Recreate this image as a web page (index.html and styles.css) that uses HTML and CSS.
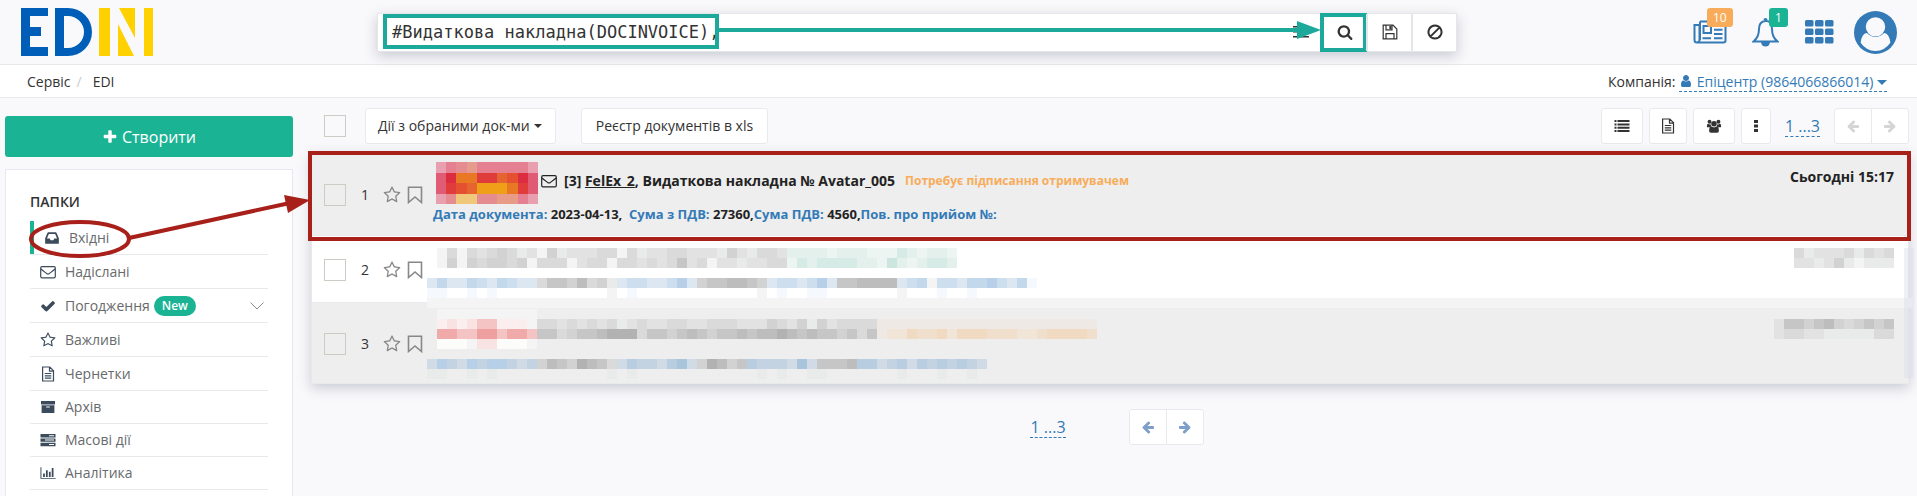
FILE: index.html
```html
<!DOCTYPE html>
<html lang="uk">
<head>
<meta charset="utf-8">
<title>EDIN</title>
<link rel="stylesheet" href="styles.css">
</head>
<body>
<svg class="defs" aria-hidden="true">
  <symbol id="i-search" viewBox="0 0 1792 1792"><path d="M1216 832q0-185-131.500-316.500t-316.500-131.500-316.500 131.500-131.500 316.500 131.500 316.500 316.500 131.500 316.500-131.500 131.500-316.500zm512 832q0 52-38 90t-90 38q-54 0-90-38l-343-342q-179 124-399 124-143 0-273.500-55.500t-225-150-150-225-55.500-273.500 55.500-273.500 150-225 225-150 273.500-55.500 273.500 55.500 225 150 150 225 55.500 273.500q0 220-124 399l343 343q37 37 37 90z"/></symbol>
  <symbol id="i-plus" viewBox="0 0 1792 1792"><path d="M1600 736v192q0 40-28 68t-68 28h-416v416q0 40-28 68t-68 28h-192q-40 0-68-28t-28-68v-416h-416q-40 0-68-28t-28-68v-192q0-40 28-68t68-28h416v-416q0-40 28-68t68-28h192q40 0 68 28t28 68v416h416q40 0 68 28t28 68z"/></symbol>
  <symbol id="i-check" viewBox="0 0 1792 1792"><path d="M1671 566q0 40-28 68l-724 724-136 136q-28 28-68 28t-68-28l-136-136-362-362q-28-28-28-68t28-68l136-136q28-28 68-28t68 28l294 295 656-657q28-28 68-28t68 28l136 136q28 28 28 68z"/></symbol>
  <symbol id="i-star" viewBox="0 0 1792 1792"><path d="M1201 1004l306-297-422-62-189-382-189 382-422 62 306 297-73 421 378-199 377 199zm527-357q0 22-26 48l-363 354 86 500q1 7 1 20 0 50-41 50-19 0-40-12l-449-236-449 236q-22 12-40 12-21 0-31.500-14.500t-10.500-35.500q0-6 2-20l86-500-364-354q-25-27-25-48 0-37 56-46l502-73 225-455q19-41 49-41t49 41l225 455 502 73q56 9 56 46z"/></symbol>
  <symbol id="i-user" viewBox="0 0 1792 1792"><path d="M1536 1399q0 109-62.500 187t-150.500 78h-854q-88 0-150.500-78t-62.500-187q0-85 8.500-160.500t31.500-152 58.500-131 94-89 134.500-34.500q131 128 313 128t313-128q76 0 134.500 34.500t94 89 58.500 131 31.500 152 8.500 160.500zm-256-887q0 159-112.500 271.500t-271.500 112.500-271.500-112.500-112.500-271.500 112.500-271.500 271.500-112.500 271.500 112.500 112.500 271.500z"/></symbol>
  <symbol id="i-inbox" viewBox="0 0 1792 1792"><path d="M1151 960h316q-1-3-2.500-8t-2.500-8l-212-496h-708l-212 496q-1 2-2.500 8t-2.500 8h316l95 192h320zm513 30v482q0 26-19 45t-45 19h-1408q-26 0-45-19t-19-45v-482q0-62 25-123l238-552q10-25 36.500-42t52.500-17h832q26 0 52.500 17t36.500 42l238 552q25 61 25 123z"/></symbol>
  <symbol id="i-left" viewBox="0 0 1792 1792"><path d="M1664 896v128q0 53-32.500 90.500t-84.500 37.500h-704l293 294q38 36 38 90t-38 90l-75 76q-37 37-90 37-52 0-91-37l-651-652q-37-37-37-90 0-52 37-91l651-650q38-38 91-38 52 0 90 38l75 74q38 38 38 91t-38 91l-293 293h704q52 0 84.500 37.500t32.500 90.500z"/></symbol>
  <symbol id="i-mail" viewBox="0 0 16 16"><path class="line" d="M2 2.700h12q1.300 0 1.300 1.300v8.500q0 1.300-1.300 1.300H2q-1.300 0-1.300-1.300V4q0-1.300 1.300-1.300zM1 5c3 2.500 4 3.200 5.500 4.400q1.500 1 3 0C11 8.200 12 7.500 15 5"/></symbol>
  <symbol id="i-file" viewBox="0 0 16 16"><path class="line" d="M2.600 1h7.200l3.700 3.700V15H2.600zM9.500 1.200v3.900h3.800M4.800 7.500h6.500M4.800 9.800h6.500M4.800 12.100h6.500"/></symbol>
  <symbol id="i-archive" viewBox="0 0 16 16"><path fill-rule="evenodd" d="M1 2h14v3.500H1zM1.600 6.200h12.800V14H1.600zM6.200 7.400v1.200h3.600V7.400z"/></symbol>
  <symbol id="i-server" viewBox="0 0 16 16"><path fill-rule="evenodd" d="M.5 2h15v3.400H.5zM9 3.200v1h5v-1zM.5 6.400h15v3.400H.5zM5 7.600v1h9v-1zM.5 10.800h15v3.400H.5zM9 12v1h5v-1z"/></symbol>
  <symbol id="i-chart" viewBox="0 0 18 16"><path d="M.5 1.500h1.100v12h16v1.100H.5zM3.500 8.500h2v4h-2zM6.700 5h2v7.500h-2zM10 6.500h2v6h-2zM13.200 2.500h2v10h-2z"/></symbol>
  <symbol id="i-list" viewBox="0 0 16 14"><path d="M.5 1h2v2h-2zM3.500 1h12v2h-12zM.5 4.400h2v2h-2zM3.500 4.400h12v2h-12zM.5 7.800h2v2h-2zM3.500 7.800h12v2h-12zM.5 11h2v2h-2zM3.500 11h12v2h-12z"/></symbol>
  <symbol id="i-users" viewBox="0 0 18 16"><circle cx="4" cy="3.200" r="2.200"/><circle cx="14" cy="3.200" r="2.200"/><circle cx="9" cy="5.400" r="3.100"/><path d="M1 8.800Q.8 5.400 2.500 5.600 4 6.600 5.400 6q0 1.800 1 2.600-1.500 0-2 .8H2Q1 9.400 1 8.800zM17 8.800q.2-3.400-1.500-3.200-1.500 1-2.900.4 0 1.800-1 2.600 1.500 0 2 .8H16q1 0 1-.6zM3.500 13.500q0-4.700 2.700-4.800Q9 10.500 11.800 8.700q2.700.1 2.700 4.800 0 2-2 2h-7q-2 0-2-2z"/></symbol>
  <symbol id="i-bookmark" viewBox="0 0 16 18"><path class="mid" d="M1.500 1.200h13v15.300L8 11l-6.500 5.500z"/></symbol>
  <symbol id="i-save" viewBox="0 0 16 16"><path class="line" d="M1.200 1.200h9.800l3.800 3.800v9.800H1.200zM4 14.500V9.600h8v4.900M4 1.500v4.300h6V1.500"/><path d="M7.400 2h2v3h-2z"/></symbol>
  <symbol id="i-ban" viewBox="0 0 16 16"><path class="bold" d="M8 1.500a6.500 6.500 0 1 0 .01 0zM3.600 12.400l8.800-8.800"/></symbol>
</svg>

<header class="top">
  <a class="logo" href="#" aria-label="EDIN">
    <svg class="logo-e" viewBox="0 0 27 48"><rect width="9" height="48"/><rect width="27" height="8"/><rect y="19" width="20" height="9"/><rect y="39" width="27" height="9"/></svg>
    <span class="logo-d"></span>
    <svg class="logo-n" viewBox="0 0 54 48"><rect width="11" height="48"/><path d="M20 0h16v30zM19 16v32h16z"/><rect x="45" width="9" height="48"/></svg>
  </a>
  <form class="search">
    <input class="query" type="text" aria-label="Пошук" value="#Видаткова накладна(DOCINVOICE),">
    <svg class="filters" viewBox="0 0 16 14"><path d="M0 1h16v1.500H0zM0 6h16v1.500H0zM0 11h16v1.500H0z"/></svg>
    <button type="button" class="tool target" aria-label="Знайти"><svg class="ic"><use href="#i-search"/></svg></button>
    <button type="button" class="tool" aria-label="Зберегти"><svg class="ic"><use href="#i-save"/></svg></button>
    <button type="button" class="tool" aria-label="Очистити"><svg class="ic"><use href="#i-ban"/></svg></button>
    <span class="query-frame"></span>
    <span class="query-arrow"></span>
  </form>
  <nav class="quick">
    <a href="#" class="news" aria-label="Новини"><svg viewBox="0 0 34 24"><path class="bold" d="M7 1.500h25.500v19q0 2-2 2H4q-2.500 0-2.500-2.500V5H6.500v15q0 2-2 2.300M7 1.500V20"/><path class="bold" d="M10.500 6h7.500v7h-7.500zM21 5.500h8.500M21 9.800h8.500M21 14.100h8.500M9.500 18.300H18M21 18.300h8.500"/></svg><span class="badge orange">10</span></a>
    <a href="#" class="bell" aria-label="Сповіщення"><svg viewBox="0 0 27 30"><path class="bold" d="M1.500 24.500Q7 20 7 12q0-7.500 6.500-8T20 12q0 8 5.500 12.500z"/><path d="M11.500 3a2 2 0 1 1 4 0zM9 25h9q-.5 4.500-4.500 4.500T9 25z"/></svg><span class="badge green">1</span></a>
    <a href="#" class="grid" aria-label="Сервіси"><svg viewBox="0 0 29 24"><rect width="8.500" height="6.500" rx="1.500"/><rect x="10" width="8.500" height="6.500" rx="1.500"/><rect x="20" width="8.500" height="6.500" rx="1.500"/><rect y="8.500" width="8.500" height="6.500" rx="1.500"/><rect x="10" y="8.500" width="8.500" height="6.500" rx="1.500"/><rect x="20" y="8.500" width="8.500" height="6.500" rx="1.500"/><rect y="17" width="8.500" height="6.500" rx="1.500"/><rect x="10" y="17" width="8.500" height="6.500" rx="1.500"/><rect x="20" y="17" width="8.500" height="6.500" rx="1.500"/></svg></a>
    <a href="#" class="avatar" aria-label="Профіль"><svg viewBox="0 0 42 42"><circle cx="21" cy="21" r="21"/><circle cx="21" cy="15.500" r="9.500" fill="#f9f9fb"/><path fill="#f9f9fb" d="M6.500 31Q7.500 22 12.500 21.500 21 29.500 29.500 21.500 34.500 22 35.500 31 30 39 21 39T6.500 31z"/></svg></a>
  </nav>
</header>

<div class="crumbs">
  <nav><a href="#">Сервіс</a><span class="slash">/</span><a href="#">EDI</a></nav>
  <div>Компанія: <a href="#" class="company"><svg class="ic"><use href="#i-user"/></svg> Епіцентр (9864066866014) <i class="caret"></i></a></div>
</div>

<div class="page">
  <aside class="side">
    <button type="button" class="create"><svg class="ic"><use href="#i-plus"/></svg> Створити</button>
    <div class="panel">
      <h2>ПАПКИ</h2>
      <ul class="folders">
        <li class="active"><a href="#"><svg class="ic"><use href="#i-inbox"/></svg>Вхідні</a></li>
        <li><a href="#"><svg class="ic"><use href="#i-mail"/></svg>Надіслані</a></li>
        <li><a href="#"><svg class="ic"><use href="#i-check"/></svg>Погодження<span class="new">New</span><svg class="chev" viewBox="0 0 14 8"><path d="M.5.500l6.500 6.500 6.500-6.500"/></svg></a></li>
        <li><a href="#"><svg class="ic"><use href="#i-star"/></svg>Важливі</a></li>
        <li><a href="#"><svg class="ic"><use href="#i-file"/></svg>Чернетки</a></li>
        <li><a href="#"><svg class="ic"><use href="#i-archive"/></svg>Архів</a></li>
        <li><a href="#"><svg class="ic"><use href="#i-server"/></svg>Масові дії</a></li>
        <li><a href="#"><svg class="ic"><use href="#i-chart"/></svg>Аналітика</a></li>
      </ul>
    </div>
  </aside>

  <main class="main">
    <div class="toolbar">
      <input type="checkbox" class="box" aria-label="Обрати все">
      <button type="button" class="btn actions">Дії з обраними док-ми <i class="caret"></i></button>
      <button type="button" class="btn xls">Реєстр документів в xls</button>
      <div class="right">
        <button type="button" class="btn" aria-label="Список"><svg class="ic"><use href="#i-list"/></svg></button>
        <button type="button" class="btn narrow" aria-label="Документ"><svg class="ic"><use href="#i-file"/></svg></button>
        <button type="button" class="btn" aria-label="Користувачі"><svg class="ic"><use href="#i-users"/></svg></button>
        <button type="button" class="btn" aria-label="Ще"><svg class="dots" viewBox="0 0 4 12"><path d="M0 0h4v3H0zM0 4.500h4v3H0zM0 9h4v3H0z"/></svg></button>
        <a href="#" class="range">1 ...3</a>
        <div class="pager off">
          <button type="button" disabled aria-label="Назад"><svg class="ic"><use href="#i-left"/></svg></button>
          <button type="button" disabled aria-label="Далі"><svg class="ic flip"><use href="#i-left"/></svg></button>
        </div>
      </div>
    </div>

    <div class="list">
      <article class="row first">
        <input type="checkbox" class="box" aria-label="Обрати документ 1"><span class="num">1</span>
        <svg class="mark"><use href="#i-star"/></svg><svg class="mark book"><use href="#i-bookmark"/></svg>
        <div class="doc">
          <div class="title"><svg class="mosaic avatar-px" data-rows="EFGHFFFFFE IJKKLLMQJI ILQMNNNKLI EGOOGGPPFE"></svg><svg class="ic"><use href="#i-mail"/></svg><b>[3] <a href="#">FelEx_2</a>, Видаткова накладна № Avatar_005</b><b class="need">Потребує підписання отримувачем</b></div>
          <p class="meta"><span>Дата документа:</span> 2023-04-13,&nbsp; <span>Сума з ПДВ:</span> 27360,<span>Сума ПДВ:</span> 4560,<span>Пов. про прийом №:</span></p>
        </div>
        <time>Сьогодні 15:17</time>
        <span class="row-frame"></span>
      </article>
      <article class="row second">
        <input type="checkbox" class="box" aria-label="Обрати документ 2"><span class="num">2</span>
        <svg class="mark"><use href="#i-star"/></svg><svg class="mark book"><use href="#i-bookmark"/></svg>
        <svg class="mosaic body-px" data-rows=".adadcdedbcaebcccddadbccddcccbecbddcssssrsssrrrtsrssr .aeaedeedeadddacddaddcdcdfcdaccbccddrtsttttssrusrstts . jljjlkjlkjjdffegdebjkkjjkmjeffggfejkkjkmjffggggjklakkjllmkjli ii..i.i...........a.i............a.i..ii.......a...i..i"></svg>
        <svg class="mosaic date-px" data-rows="dbcccdbdcd ccbcebabbb"></svg>
      </article>
      <article class="row third">
        <input type="checkbox" class="box" aria-label="Обрати документ 3"><span class="num">3</span>
        <svg class="mark"><use href="#i-star"/></svg><svg class="mark book"><use href="#i-bookmark"/></svg>
        <svg class="mosaic body-px" data-rows=".aaaaaaaaaa .vwvwxxvvvaddcdcdcdbcdccddccdddcccedcebecddddAAAAAAAAAAAAAAAAAAAAAA .yyxxzzxyyxffdeffghhhdffefgfeffgfgghgfgffefdfABBDCCDBDDDCCCBBCDDDDC .WWWawwWWWa . nmonmommonoegfehgfdnpoonpqnehgefpooonqnfffgppnopnpopopon bb..b.b...........b.b............b.b..bb.......b...b..b"></svg>
        <svg class="mosaic date-px" data-rows="cffefgedefef cddccbbbbbdd"></svg>
        <span class="band"></span>
      </article>
      <span class="edge"></span>
    </div>

    <div class="foot">
      <a href="#" class="range">1 ...3</a>
      <div class="pager">
        <button type="button" aria-label="Попередня сторінка"><svg class="ic"><use href="#i-left"/></svg></button>
        <button type="button" aria-label="Наступна сторінка"><svg class="ic flip"><use href="#i-left"/></svg></button>
      </div>
    </div>
  </main>
  <svg class="pointer" width="312" height="80" viewBox="0 0 312 80" aria-hidden="true"><ellipse cx="80" cy="50" rx="49" ry="17"/><path d="M129 49L290 14"/><path class="head" d="M284 6l26 5-22 13z"/></svg>
</div>
<script src="script.js"></script>
</body>
</html>
```

FILE: styles.css
```css
* { box-sizing: border-box; }
body { margin: 0; min-height: 100vh; display: flex; flex-direction: column; background: #f9f9fb; color: #333; font: 14px/20px "Open Sans", sans-serif; }
a { color: inherit; text-decoration: none; }
button { font: inherit; color: inherit; cursor: pointer; padding: 0; }
svg { fill: currentColor; flex: none; }
.defs { position: absolute; width: 0; height: 0; }
.ic { width: 16px; height: 16px; }
.line { fill: none; stroke: currentColor; stroke-width: 1.2; }
.mid { fill: none; stroke: currentColor; stroke-width: 1.6; }
.bold { fill: none; stroke: currentColor; stroke-width: 2; }
.flip { transform: scaleX(-1); }
.caret { display: inline-block; border: 4px solid transparent; border-top-color: currentColor; border-bottom: 0; vertical-align: middle; }

.top { height: 65px; display: grid; grid-template-columns: 377fr 1080fr 460fr; align-items: center; border-bottom: 1px solid #e7eaec; }
.logo { display: flex; gap: 7px; padding-left: 21px; color: #005eb8; }
.logo-e { width: 27px; height: 48px; }
.logo-d { width: 37px; height: 48px; border: 8px solid #005eb8; border-left-width: 9px; border-radius: 0 24px 24px 0; }
.logo-n { width: 54px; height: 48px; color: #ffd100; }
.search { position: relative; display: flex; height: 39px; background: #fff; border: 1px solid #e5e6e7; box-shadow: 0 4px 12px rgba(60, 60, 100, .25); }
.query { flex: 1; min-width: 0; border: 0; padding: 0 14px; background: none; color: #333; font: 17px "DejaVu Sans Mono", monospace; }
.filters { width: 16px; height: 14px; align-self: center; margin-right: 12px; }
.tool { width: 45px; border: 0; border-left: 2px solid #e5e6e7; background: #fff; display: grid; place-items: center; }
.target { outline: 4px solid #1ca99c; outline-offset: -3px; }
.query-frame { position: absolute; left: 5px; top: 0; width: 336px; height: 35px; border: 4px solid #1ca99c; }
.query-arrow { position: absolute; left: 340px; right: 158px; top: 14px; height: 4px; background: #1ca99c; }
.query-arrow::after { content: ""; position: absolute; right: -23px; top: -7px; border: 9px solid transparent; border-left: 24px solid #1ca99c; border-right: 0; }
.quick { display: flex; align-items: center; justify-content: flex-end; padding-right: 20px; color: #337ab7; }
.quick a { position: relative; display: block; }
.quick svg { display: block; width: 100%; }
.news { width: 34px; margin-right: 25px; }
.bell { width: 27px; margin-right: 26px; }
.grid { width: 29px; margin-right: 20px; }
.avatar { width: 43px; }
.badge { position: absolute; left: 14px; top: -12px; padding: 0 6px; border-radius: 3px; color: #fff; font-size: 12px; line-height: 19px; }
.bell .badge { left: 17px; top: -9px; }
.orange { background: #f8ac59; }
.green { background: #1ab394; }

.crumbs { height: 33px; display: flex; align-items: center; justify-content: space-between; padding: 1px 30px 0 27px; background: #fff; border-bottom: 1px solid #e7eaec; }
.slash { color: #ccc; padding: 0 11px 0 6px; }
.company { color: #337ab7; border-bottom: 1px dashed #337ab7; }
.company .ic { width: 14px; height: 14px; vertical-align: -1px; }
.company .caret { border-width: 5px 5px 0; }

.page { position: relative; flex: 1; display: flex; gap: 18px; padding: 0 8px 0 5px; }
.side { width: 288px; flex: none; display: flex; flex-direction: column; padding-top: 18px; }
.create { height: 41px; display: flex; align-items: center; justify-content: center; gap: 4px; border: 0; border-radius: 3px; background: #1ab394; color: #fff; font-size: 16px; }
.panel { flex: 1; margin-top: 12px; padding: 21px 24px 0; background: #fff; border: 1px solid #e7e7f3; border-bottom: 0; }
h2 { margin: 0; font-size: 14px; line-height: 22px; font-weight: 600; }
.folders { list-style: none; margin: 8px 0 0; padding: 0; }
.folders li { border-bottom: 1px solid #e7eaec; }
.folders a { display: flex; align-items: center; height: 33px; padding: 0 4px 0 10px; color: #676a6c; }
.folders li:nth-child(n+6) a { height: 32px; }
.folders .ic { margin-right: 9px; color: #3b4b5c; }
.folders .active a { border-left: 4px solid #1ab394; }
.new { margin-left: 4px; padding: 0 8px; border-radius: 10px; background: #1ab394; color: #fff; font-size: 12px; font-weight: 600; line-height: 20px; }
.chev { width: 14px; height: 8px; margin-left: auto; fill: none; stroke: #888; }

.main { flex: 1; min-width: 0; }
.toolbar { display: flex; align-items: center; padding: 10px 0 8px 13px; }
.box { appearance: none; flex: none; width: 22px; height: 22px; margin: 0; border: 1px solid #cecac4; background: transparent; }
.btn { height: 36px; display: flex; align-items: center; gap: 4px; padding: 0 12px; background: #fff; border: 1px solid #e7eaec; border-radius: 3px; white-space: nowrap; }
.narrow { padding: 0 10px; }
.actions { margin: 0 25px 0 19px; padding: 0 13px 0 12px; }
.xls { padding: 0 14px; }
.right { display: flex; margin-left: auto; gap: 6px; align-items: center; }
.dots { width: 4px; height: 12px; }
.range { margin: 0 8px; color: #337ab7; font-size: 16px; line-height: 20px; border-bottom: 1px dashed #337ab7; }
.pager { display: flex; }
.pager button { width: 38px; height: 36px; display: grid; place-items: center; background: #fff; border: 1px solid #e7eaec; color: #7d9fc9; border-radius: 3px 0 0 3px; }
.pager button + button { margin-left: -1px; border-radius: 0 3px 3px 0; }
.pager .ic { width: 14px; height: 14px; }
.pager.off button { color: #d5d5d5; }

.list { position: relative; border: 1px solid #e7eaec; background: #fff; box-shadow: 0 4px 12px rgba(60, 60, 100, .25); }
.row { position: relative; display: flex; align-items: center; padding: 2px 14px 0 12px; border-bottom: 1px solid #e7eaec; }
.row:nth-of-type(odd) { background: #eee; }
.first { min-height: 83px; }
.second { min-height: 67px; }
.third { min-height: 80px; }
.row:nth-of-type(3) { border-bottom: 0; }
.num { width: 37px; padding-left: 15px; }
.mark { width: 18px; height: 18px; margin-right: 6px; color: #888; }
.book { width: 16px; margin-right: 4px; }
.doc { margin-left: 6px; align-self: flex-start; padding-top: 7px; }
.title { display: flex; align-items: center; color: #222; }
.title b { margin-bottom: 4px; }
.title .ic { margin: 0 7px 4px 3px; }
.title a { text-decoration: underline; }
.title .need { margin-left: 10px; color: #f8ac59; font-size: 12px; }
.meta { margin: 0; font-size: 13px; line-height: 20px; font-weight: 700; color: #222; }
.meta span { color: #337ab7; }
time { margin-left: auto; align-self: flex-start; padding-top: 12px; font-weight: 700; color: #222; }
.mosaic { display: block; shape-rendering: crispEdges; }
.avatar-px { width: 102px; height: 42px; margin-left: 3px; }
.body-px, .date-px { align-self: flex-start; margin-top: 10px; }
.third .body-px { margin-top: 4px; }
.third .date-px { margin-top: 14px; }
.date-px { margin-left: auto; }
.row-frame { position: absolute; inset: -2px -3px -6px -4px; border: 4px solid #a8201a; z-index: 2; }
.band { position: absolute; left: 115px; right: -5px; top: -5px; height: 10px; background: #f4f4f4; }
.edge { position: absolute; right: -6px; top: 95px; bottom: 5px; width: 10px; background: rgba(220, 221, 235, .45); }
.foot { display: flex; justify-content: center; align-items: center; gap: 55px; padding: 25px 0 0 6px; }
.pointer { position: absolute; left: 0; top: 91px; fill: none; stroke: #a8201a; stroke-width: 4; pointer-events: none; }
.pointer .head { fill: #a8201a; stroke: none; }
```

FILE: script.js
```js
const palette = {
  W: "#fcfcfb", a: "#f4f4f4", b: "#e9eaea", c: "#e2e2e2", d: "#dadada", e: "#d2d2d2", f: "#c6c6c6", g: "#bdbdbd", h: "#b2b2b2",
  i: "#f5f9fd", j: "#dce7f2", k: "#cddfee", l: "#c3d8ea", m: "#b7d0e8",
  n: "#d0dbe5", o: "#c3d3e1", p: "#b8cee0", q: "#a9c5dc",
  r: "#edf5f2", s: "#e3f0ec", t: "#d6ebe5", u: "#cce6df",
  v: "#fbeeee", w: "#f8e2e2", x: "#f4c3c3", y: "#f0aaaa", z: "#eea0a0",
  A: "#efe9e5", B: "#f1e5d8", C: "#f0dfcc", D: "#f1dac2",
  E: "#e8a0b0", F: "#e48092", G: "#e48c90", H: "#e59c8c", I: "#e05c74", J: "#dc2c40", K: "#e87824",
  L: "#e03c3c", M: "#e66430", N: "#f0a018", O: "#f0c87c", P: "#e89c88", Q: "#e45030"
};
const cell = 10;

document.querySelectorAll(".mosaic").forEach((svg) => {
  const rows = svg.dataset.rows.split(" ");
  const width = cell * Math.max(...rows.map((r) => r.length));
  const height = cell * rows.length;
  svg.setAttribute("width", width);
  svg.setAttribute("height", height);
  svg.setAttribute("viewBox", `0 0 ${width} ${height}`);
  svg.setAttribute("preserveAspectRatio", "none");
  rows.forEach((row, y) => [...row].forEach((key, x) => {
    if (!palette[key]) return;
    const rect = document.createElementNS("http://www.w3.org/2000/svg", "rect");
    rect.setAttribute("x", x * cell);
    rect.setAttribute("y", y * cell);
    rect.setAttribute("width", cell);
    rect.setAttribute("height", cell);
    rect.setAttribute("fill", palette[key]);
    svg.append(rect);
  }));
});
```
